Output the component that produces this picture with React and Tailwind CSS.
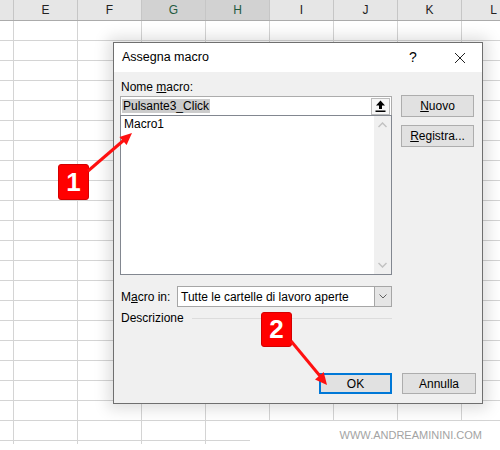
import React from "react";

const COLS = ["E", "F", "G", "H", "I", "J", "K", "L"];
const ROWS = Array.from({ length: 21 }, (_, i) => i);

const Sheet = () => {
	return (
		<div className="absolute inset-0 overflow-hidden bg-white">
			{/* Column headers */}
			<div className="flex h-[21px] bg-[#e6e6e6] border-b border-[#ababab] w-[560px]">
				<div className="w-[14px] shrink-0 border-r border-[#c6c6c6]" />
				{COLS.map((c) => (
					<div
						key={c}
						className={`w-[64px] shrink-0 border-r border-[#c6c6c6] flex items-center justify-center text-[12px] ${
							c === "G" || c === "H"
								? "bg-[#d2d2d2] text-[#1f5b40]"
								: "text-[#222]"
						}`}
					>
						{c}
					</div>
				))}
			</div>
			{/* Cells */}
			{ROWS.map((r) => (
				<div key={r} className="flex h-[20px] border-b border-[#d4d4d4] w-[560px]">
					<div className="w-[14px] shrink-0 border-r border-[#d4d4d4]" />
					{COLS.map((c) => (
						<div key={c} className="w-[64px] shrink-0 border-r border-[#d4d4d4]" />
					))}
				</div>
			))}
			<div className="flex h-[3px] w-[560px]">
				<div className="w-[14px] shrink-0 border-r border-[#d4d4d4]" />
				{COLS.map((c) => (
					<div key={c} className="w-[64px] shrink-0 border-r border-[#d4d4d4]" />
				))}
			</div>
		</div>
	);
};

const Dialog = () => {
	return (
		<div className="absolute left-[113px] top-[42px] w-[370px] h-[362px] border border-[#6f6f6f] bg-[#f0f0f0] shadow-[0_0_14px_5px_rgba(0,0,0,0.13)] text-[12px] text-black">
			{/* Title bar */}
			<div className="h-[29px] bg-white flex items-center pl-[8px]">
				<span className="flex-1 text-[12.5px]">Assegna macro</span>
				<span className="w-[20px] text-center text-[14px] mr-[31px]">?</span>
				<svg className="w-[12px] h-[12px] mr-[16px]" viewBox="0 0 12 12">
					<path d="M1 1L11 11M11 1L1 11" stroke="#222" strokeWidth="1" fill="none" />
				</svg>
			</div>

			{/* Body */}
			<div className="pl-[6px] pt-[7px]">
				<div className="h-[16px] leading-[16px] pl-px">
					Nome <span className="underline">m</span>acro:
				</div>

				<div className="flex">
					<div className="w-[272px]">
						{/* Name field */}
						<div className="mt-px h-[19px] bg-white border-t border-l border-r border-[#acacac] flex items-center">
							<span className="ml-px bg-[#cccccc] leading-[14px] px-px">Pulsante3_Click</span>
							<div className="ml-auto mr-px w-[19px] h-[17px] bg-[#f7f7f7] border border-[#bcbcbc] flex items-center justify-center">
								<svg className="w-[11px] h-[12px]" viewBox="0 0 11 12">
									<path d="M5.5 0.5L1 5.5H4V9H7V5.5H10Z" fill="#000" />
									<rect x="0.5" y="10.5" width="10" height="1.5" fill="#000" />
								</svg>
							</div>
						</div>
						{/* List */}
						<div className="h-[160px] bg-white border border-[#828790] flex">
							<div className="flex-1 pl-[3px] pt-[1px] leading-[15px]">Macro1</div>
							<div className="w-[17px] bg-[#f0f0f0] flex flex-col items-center justify-between py-[6px]">
								<svg className="w-[9px] h-[6px]" viewBox="0 0 9 6">
									<path d="M0.5 5L4.5 1L8.5 5" stroke="#c2c2c2" strokeWidth="1.5" fill="none" />
								</svg>
								<svg className="w-[9px] h-[6px]" viewBox="0 0 9 6">
									<path d="M0.5 1L4.5 5L8.5 1" stroke="#c2c2c2" strokeWidth="1.5" fill="none" />
								</svg>
							</div>
						</div>
					</div>
					<div className="ml-[9px] flex flex-col gap-[8px]">
						<button className="w-[73px] h-[22px] bg-[#e1e1e1] border border-[#adadad] text-[12px]">
							<span className="underline">N</span>uovo
						</button>
						<button className="w-[73px] h-[22px] bg-[#e1e1e1] border border-[#adadad] text-[12px]">
							<span className="underline">R</span>egistra...
						</button>
					</div>
				</div>

				{/* Macro in */}
				<div className="flex items-center mt-[11px] h-[21px]">
					<span className="w-[57px] pl-px">
						M<span className="underline">a</span>cro in:
					</span>
					<div className="w-[215px] h-[21px] bg-white border border-[#a6a6a6] flex items-center">
						<span className="flex-1 pl-[3px]">Tutte le cartelle di lavoro aperte</span>
						<div className="w-[17px] h-full bg-[#e5e5e5] border-l border-[#a6a6a6] flex items-center justify-center">
							<svg className="w-[8px] h-[5px]" viewBox="0 0 8 5">
								<path d="M0.5 0.5L4 4L7.5 0.5" stroke="#606060" strokeWidth="1" fill="none" />
							</svg>
						</div>
					</div>
				</div>

				{/* Descrizione */}
				<div className="flex items-center mt-[3px] h-[16px] w-[272px]">
					<span className="pl-px">Descrizione</span>
					<div className="ml-[8px] flex-1 h-px bg-[#dcdcdc]" />
				</div>

				{/* Bottom buttons */}
				<div className="flex justify-end gap-[10px] mt-[47px] pr-[6px]">
					<button className="w-[73px] h-[21px] bg-[#e1e1e1] border-2 border-[#0078d7] text-[12px]">
						OK
					</button>
					<button className="w-[74px] h-[21px] bg-[#e1e1e1] border border-[#adadad] text-[12px]">
						Annulla
					</button>
				</div>
			</div>
		</div>
	);
};

const Callouts = () => {
	return (
		<>
			<div className="absolute left-[58px] top-[164px] w-[31px] h-[36px] bg-[#ff0000] border border-[#d40000] rounded-[3px] flex items-center justify-center text-white font-bold text-[26px]">
				1
			</div>
			<div className="absolute left-[261px] top-[312px] w-[31px] h-[35px] bg-[#ff0000] border border-[#d40000] rounded-[3px] flex items-center justify-center text-white font-bold text-[26px]">
				2
			</div>
			<svg className="absolute inset-0 w-[500px] h-[450px] pointer-events-none" viewBox="0 0 500 450">
				<line x1="88" y1="171" x2="124" y2="140" stroke="#ff1010" strokeWidth="3" />
				<polygon points="132,133 126.6,145 119.4,137" fill="#ff1010" />
				<line x1="291" y1="341" x2="320" y2="376" stroke="#ff1010" strokeWidth="3" />
				<polygon points="327,385 323.7,372 315,379.5" fill="#ff1010" />
			</svg>
		</>
	);
};

export default function App() {
	return (
		<div
			className="relative w-[500px] h-[450px] overflow-hidden bg-white"
			style={{ fontFamily: '"Liberation Sans", Arial, sans-serif' }}
		>
			<Sheet />
			<div className="absolute right-0 top-[421px] w-[250px] h-[29px] bg-white flex items-center justify-end pr-[18px] text-[11px] text-[#a3a3a3]">
				WWW.ANDREAMININI.COM
			</div>
			<Dialog />
			<Callouts />
		</div>
	);
}
